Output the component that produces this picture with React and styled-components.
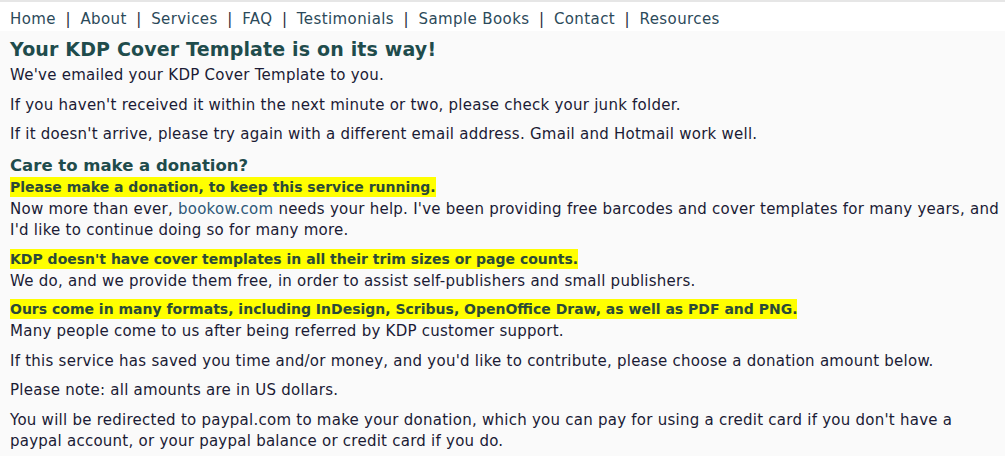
import styled, { createGlobalStyle } from "styled-components";

const GlobalStyle = createGlobalStyle`
  body {
    margin: 0;
    background: #fafafa;
    font-family: "DejaVu Sans", Verdana, sans-serif;
    color: #1b1b35;
  }
`;

const Nav = styled.nav`
  display: flex;
  align-items: center;
  height: 25px;
  padding: 4px 10px 0;
  background: #fff;
  border-top: 2px solid #e6e6e6;
  font-size: 15px;
  letter-spacing: 0.4px;
`;

const NavLink = styled.a`
  color: #2c4a5a;
  text-decoration: none;
`;

const Sep = styled.span`
  margin: 0 9.5px;
  color: #2a2a3a;
`;

const Main = styled.main`
  padding: 0 0 0 10px;
  font-size: 15px;
  line-height: 21px;
  letter-spacing: 0.25px;
`;

const Title = styled.h1`
  margin: 6px 0 4px;
  font-size: 19px;
  line-height: 24px;
  letter-spacing: 0.15px;
  color: #1f4c4c;
`;

const SubTitle = styled.h2`
  margin: 9.5px 0 0;
  font-size: 16.5px;
  line-height: 22px;
  letter-spacing: 0;
  color: #1f4c4c;
`;

const Para = styled.p`
  margin: 0 0 8.5px;
`;

const Callout = styled.div`
  margin: 1.5px 0 2px;
  font-weight: bold;
  font-size: 14px;
  line-height: 19px;
  letter-spacing: 0;

  span {
    background: #ffff00;
    color: #2b4a38;
    padding: 2px 0;
  }
`;

const Link = styled.a`
  color: #2e5878;
  text-decoration: none;
`;

const links = ["Home", "About", "Services", "FAQ", "Testimonials", "Sample Books", "Contact", "Resources"];

export default function App() {
  return (
    <>
      <GlobalStyle />
      <Nav>
        {links.map((l, i) => (
          <span key={l}>
            {i > 0 && <Sep>|</Sep>}
            <NavLink href="#">{l}</NavLink>
          </span>
        ))}
      </Nav>
      <Main>
        <Title>Your KDP Cover Template is on its way!</Title>
        <Para>We've emailed your KDP Cover Template to you.</Para>
        <Para>If you haven't received it within the next minute or two, please check your junk folder.</Para>
        <Para>If it doesn't arrive, please try again with a different email address. Gmail and Hotmail work well.</Para>

        <SubTitle>Care to make a donation?</SubTitle>
        <Callout><span>Please make a donation, to keep this service running.</span></Callout>
        <Para>
          Now more than ever, <Link href="#">bookow.com</Link> needs your help. I've been providing free barcodes and cover templates for many years, and I'd like to continue doing so for many more.
        </Para>
        <Callout><span>KDP doesn't have cover templates in all their trim sizes or page counts.</span></Callout>
        <Para>We do, and we provide them free, in order to assist self-publishers and small publishers.</Para>
        <Callout><span>Ours come in many formats, including InDesign, Scribus, OpenOffice Draw, as well as PDF and PNG.</span></Callout>
        <Para>Many people come to us after being referred by KDP customer support.</Para>
        <Para>If this service has saved you time and/or money, and you'd like to contribute, please choose a donation amount below.</Para>
        <Para>Please note: all amounts are in US dollars.</Para>
        <Para>You will be redirected to paypal.com to make your donation, which you can pay for using a credit card if you don't have a paypal account, or your paypal balance or credit card if you do.</Para>
      </Main>
    </>
  );
}
